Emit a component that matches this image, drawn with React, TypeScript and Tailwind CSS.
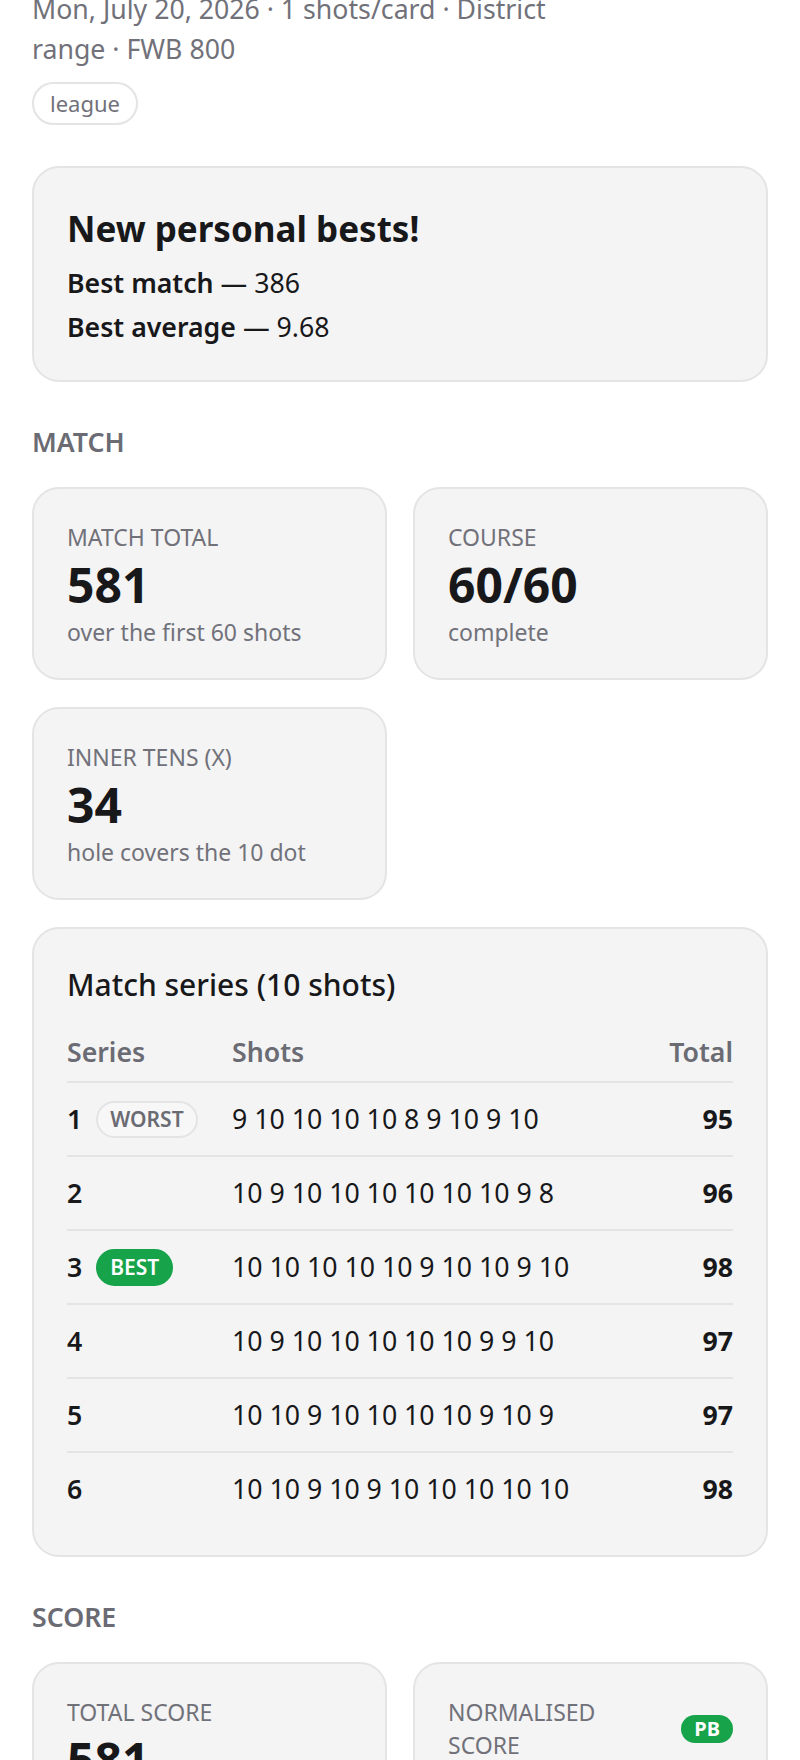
const series = [
  { n: 1, shots: "9 10 10 10 10 8 9 10 9 10", total: 95, tag: "worst" },
  { n: 2, shots: "10 9 10 10 10 10 10 10 9 8", total: 96 },
  { n: 3, shots: "10 10 10 10 10 9 10 10 9 10", total: 98, tag: "best" },
  { n: 4, shots: "10 9 10 10 10 10 10 9 9 10", total: 97 },
  { n: 5, shots: "10 10 9 10 10 10 10 9 10 9", total: 97 },
  { n: 6, shots: "10 10 9 10 9 10 10 10 10 10", total: 98 },
];

function StatCard({
  label,
  value,
  sub,
  pb,
}: {
  label: string;
  value: string;
  sub: string;
  pb?: boolean;
}) {
  return (
    <div className="rounded-[27px] border-2 border-[#e4e4e7] bg-[#f4f4f4] px-[33px] pt-[32px] pb-[29px]">
      <div className="flex items-center justify-between gap-[13px]">
        <p className="max-w-[200px] text-[23px] leading-[33px] uppercase text-[#71717a]">{label}</p>
        {pb && (
          <span className="rounded-full bg-[#16a34a] px-[13px] text-[20px] leading-[28px] font-bold text-white">
            PB
          </span>
        )}
      </div>
      <p className="text-[48px] leading-[62px] font-bold text-[#18181b]">{value}</p>
      <p className="text-[23px] leading-[33px] text-[#71717a]">{sub}</p>
    </div>
  );
}

function SectionLabel({ children }: { children: string }) {
  return (
    <h2 className="mt-[40px] mb-[25px] text-[26.7px] leading-[40px] font-semibold uppercase text-[#6b6b73]">
      {children}
    </h2>
  );
}

export default function App() {
  return (
    <div className="min-h-screen overflow-hidden bg-white font-['Noto_Sans','Open_Sans',sans-serif] text-[#18181b]">
      <div className="-mt-[11px] px-[32px] pb-[40px]">
        <p className="max-w-[575px] text-[26.7px] leading-[40px] text-[#71717a]">
          Mon, July 20, 2026 · 1 shots/card · District range · FWB 800
        </p>
        <span className="mt-[13px] inline-block rounded-full border-2 border-[#e4e4e7] px-[16px] py-[4px] text-[22px] leading-[31px] text-[#71717a]">
          league
        </span>

        <div className="mt-[41px] rounded-[27px] border-2 border-[#e4e4e7] bg-[#f4f4f4] px-[33px] pt-[33px] pb-[31px]">
          <h3 className="text-[35px] leading-[56px] font-bold">New personal bests!</h3>
          <div className="mt-[4px] text-[26.7px] leading-[44px]">
            <p>
              <span className="font-semibold">Best match</span> — 386
            </p>
            <p>
              <span className="font-semibold">Best average</span> — 9.68
            </p>
          </div>
        </div>

        <SectionLabel>Match</SectionLabel>
        <div className="grid grid-cols-2 gap-x-[26px] gap-y-[27px]">
          <StatCard label="Match total" value="581" sub="over the first 60 shots" />
          <StatCard label="Course" value="60/60" sub="complete" />
          <StatCard label="Inner tens (X)" value="34" sub="hole covers the 10 dot" />
        </div>

        <div className="mt-[27px] rounded-[27px] border-2 border-[#e4e4e7] bg-[#f4f4f4] px-[33px] pt-[33px] pb-[30px]">
          <h3 className="mb-[16px] text-[30px] leading-[46px] font-medium">Match series (10 shots)</h3>
          <div className="grid grid-cols-[165px_1fr_auto] border-b-2 border-[#e4e4e7] pt-[8px] pb-[9px] text-[26.7px] leading-[40px] font-semibold text-[#6b6b73]">
            <span>Series</span>
            <span>Shots</span>
            <span className="text-right">Total</span>
          </div>
          {series.map((s, i) => (
            <div
              key={s.n}
              className={`grid grid-cols-[165px_1fr_auto] items-center py-[16px] text-[26.7px] leading-[40px] ${
                i < series.length - 1 ? "border-b-2 border-[#e4e4e7]" : ""
              }`}
            >
              <span className="flex items-center gap-[14px] font-semibold">
                {s.n}
                {s.tag === "worst" && (
                  <span className="rounded-full border-2 border-[#e4e4e7] bg-[#f7f7f8] px-[12px] py-[2px] text-[21px] leading-[29px] font-semibold text-[#6b6b73]">
                    WORST
                  </span>
                )}
                {s.tag === "best" && (
                  <span className="rounded-full border-2 border-[#16a34a] bg-[#16a34a] px-[12px] py-[2px] text-[21px] leading-[29px] font-semibold text-white">
                    BEST
                  </span>
                )}
              </span>
              <span>{s.shots}</span>
              <span className="text-right font-bold">{s.total}</span>
            </div>
          ))}
        </div>

        <SectionLabel>Score</SectionLabel>
        <div className="grid grid-cols-2 gap-x-[26px] gap-y-[27px]">
          <StatCard label="Total score" value="581" sub="60 of 60 shots" />
          <StatCard label="Normalised score" value="9.68" sub="per shot" pb />
        </div>
      </div>
    </div>
  );
}
